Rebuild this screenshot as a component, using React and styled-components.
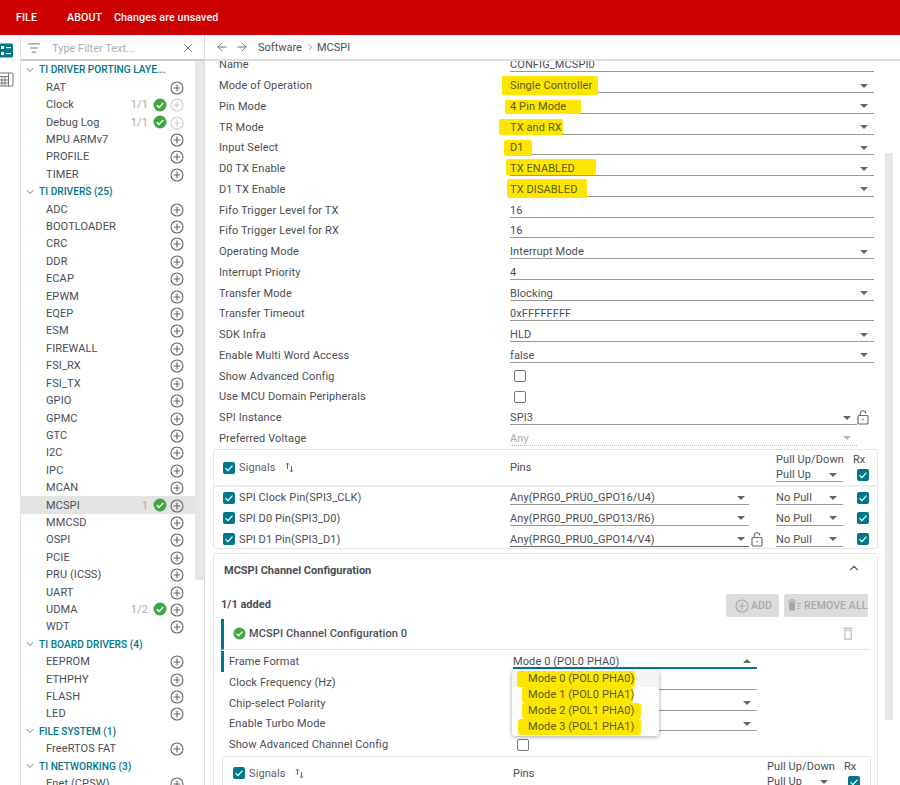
import React from 'react';
import styled, { createGlobalStyle } from 'styled-components';
import { ArrowLeft, ArrowRight, X, ListFilter, ChevronDown, ChevronUp, ChevronRight } from 'lucide-react';

const TEAL = '#00788a';
const YELLOW = '#ffe600';

const Global = createGlobalStyle`
  html, body { margin: 0; padding: 0; background: #fff; }
  body { font-family: Roboto, "Liberation Sans", sans-serif; font-size: 11px; color: #4a4d55; }
  * { box-sizing: border-box; }
`;

const Page = styled.div`
  width: 900px; height: 785px; overflow: hidden; display: flex; flex-direction: column;
`;
const TopBar = styled.header`
  height: 35px; flex: none; background: #cc0000; color: #fff; display: flex; align-items: center;
  padding-left: 16px; font-weight: 500; font-size: 10.7px; letter-spacing: .1px;
`;
const MenuItem = styled.span`
  width: ${p => p.$w}px; flex: none;
`;
const Body = styled.div`
  flex: 1; min-height: 0; display: flex;
`;
const Rail = styled.nav`
  width: 21px; flex: none; border-right: 1px solid #e4e4e4; display: flex; flex-direction: column; gap: 14px; padding-top: 8px;
`;
const Sidebar = styled.aside`
  width: 184px; flex: none; display: flex; flex-direction: column; border-right: 1px solid #ddd;
`;
const FilterBar = styled.div`
  height: 26px; flex: none; display: flex; align-items: center; padding: 2px 9px 0 6px; border-bottom: 2px solid #ccc; color: #666;
`;
const FilterText = styled.span`
  flex: 1; color: #aab0b5; margin-left: 11px; font-size: 11px;
`;
const SideScroll = styled.div`
  flex: 1; min-height: 0; display: flex; overflow: hidden;
`;
const TreeList = styled.div`
  width: 174px; flex: none; padding-top: .2px;
`;
const SideTrack = styled.div`
  width: 9px; height: 519px; flex: none; background: #e6e6e6;
`;
const SectionRow = styled.div`
  height: 17.42px; display: flex; align-items: center; padding-left: 3px; color: ${TEAL}; font-weight: 500; font-size: 10.2px; white-space: nowrap;
  svg { color: #777; margin-right: 3px; flex: none; }
`;
const ItemRow = styled.div`
  height: 17.42px; display: flex; align-items: center; padding-left: 25px; padding-right: 11px; white-space: nowrap;
  background: ${p => (p.$active ? '#e4e4e4' : 'transparent')}; font-size: 11px; letter-spacing: .1px;
`;
const ItemName = styled.span`
  flex: 1;
`;
const ItemCount = styled.span`
  color: #a9a9a9; margin-right: 5px;
`;
const Main = styled.main`
  flex: 1; min-width: 0; display: flex; flex-direction: column;
`;
const Crumbs = styled.div`
  height: 26px; flex: none; display: flex; align-items: center; padding-left: 10px; border-bottom: 2px solid #ddd;
  color: #666; svg { flex: none; }
`;
const CrumbText = styled.span`
  color: #4a4d55; font-size: 11px; margin-left: ${p => p.$gap || 0}px;
`;
const MainScroll = styled.div`
  flex: 1; min-height: 0; overflow: hidden; display: flex;
`;
const Content = styled.div`
  width: 680px; flex: none; padding: 0 7px 0 8px; margin-top: -6.4px;
`;
const MainTrack = styled.div`
  width: 8px; height: 567px; margin-top: 92px; background: #e6e6e6; flex: none;
`;
const FormRow = styled.div`
  height: 20.75px; display: grid; grid-template-columns: ${p => p.$label || 291}px 1fr ${p => p.$tail || 0}px;
  align-items: center; padding-left: 6px; padding-right: ${p => p.$right ?? 4}px; position: relative;
  white-space: nowrap;
`;
const Label = styled.span`
  font-size: 11px; letter-spacing: .12px;
`;
const Value = styled.div`
  height: 15px; line-height: 13px; padding-top: 1px; border-bottom: ${p => (p.$thick ? 2 : 1)}px ${p => (p.$dotted ? 'dotted' : 'solid')} ${p => p.$line || '#999'};
  display: flex; justify-content: space-between; align-items: center; padding-right: 6px; letter-spacing: .1px;
  color: ${p => (p.$muted ? '#aaa' : 'inherit')};
`;
const Caret = styled.i`
  width: 0; height: 0; flex: none; border-left: 4px solid transparent; border-right: 4px solid transparent;
  border-${p => (p.$up ? 'bottom' : 'top')}: 4px solid ${p => (p.$muted ? '#bbb' : '#666')};
`;
const Highlight = styled.span`
  background: ${YELLOW};
  padding: ${p => p.$t}px ${p => p.$r}px ${p => p.$b}px ${p => p.$l}px;
  margin: -${p => p.$t}px -${p => p.$r}px -${p => p.$b}px -${p => p.$l}px;
  border-radius: 2px; color: #5a5a10;
`;
const Box = styled.span`
  width: 12px; height: 12px; flex: none; display: inline-flex; align-items: center; justify-content: center; border-radius: 2px;
  background: ${p => (p.$on ? TEAL : '#fff')}; border: ${p => (p.$on ? 'none' : '1.5px solid #777')};
`;
const FormBox = styled(Box)`
  margin-left: 4px;
`;
const Card = styled.section`
  border: 1px solid #e6e6e6; border-radius: 3px; background: #fff;
`;
const SignalsCard = styled(Card)`
  height: 100px; margin-top: 0.5px; padding-left: 9px;
`;
const InnerCard = styled(Card)`
  margin: 1px 6px 0 8px; padding-left: 10px; height: 60px;
`;
const SignalsGrid = styled.div`
  display: grid; align-items: center; height: ${p => p.$h}px; white-space: nowrap;
  grid-template-columns: ${p => p.$cols};
  ${p => p.$head && 'border-bottom: 2px solid #eee; margin-left: -9px; padding-left: 9px;'}
`;
const SignalName = styled.span`
  display: flex; align-items: center; gap: 4px; letter-spacing: .1px;
  svg { flex: none; }
`;
const HeadName = styled(SignalName)`
  color: #5b6068;
`;
const SortMark = styled.span`
  margin-left: 5px; display: inline-flex;
`;
const PinCell = styled.div`
  display: flex; align-items: center; gap: 2px;
`;
const PinValue = styled(Value)`
  width: 239px; flex: none; padding-right: 4px;
`;
const PullStack = styled.div`
  display: flex; flex-direction: column; align-self: start; padding-top: 2px;
`;
const PullTitle = styled.span`
  line-height: 15px; letter-spacing: .1px;
`;
const RxCell = styled.div`
  grid-column: 5; display: flex; flex-direction: column; align-items: flex-start; align-self: start; padding-top: 2px; gap: 2px;
`;
const RxTitle = styled.span`
  margin-left: -4px; line-height: 15px;
`;
const ChannelCard = styled(Card)`
  margin-top: 3.5px; height: 260px;
`;
const ChannelHead = styled.div`
  height: 33px; display: flex; align-items: center; justify-content: space-between; padding: 0 16px 0 10px; font-weight: 700; color: #4a4d55;
  svg { color: #666; margin-top: -4px; }
`;
const AddedRow = styled.div`
  height: 32px; display: flex; align-items: flex-start; justify-content: space-between; padding: 7px 9px 0 7px;
`;
const AddedText = styled.b`
  font-weight: 700; margin-top: 4px;
`;
const BtnGroup = styled.div`
  display: flex; gap: 5px;
`;
const GreyBtn = styled.span`
  height: 23px; display: inline-flex; align-items: center; gap: 2px; padding: 0 0 0 ${p => p.$pad}px; background: #dcdcdc; color: #a8a8a8;
  font-weight: 500; font-size: 10.5px; border-radius: 2px; letter-spacing: .1px; width: ${p => p.$w}px; white-space: nowrap; overflow: hidden;
`;
const InstanceRow = styled.div`
  height: 31px; margin: 0 7px; border-left: 3px solid ${TEAL}; border-bottom: 1px solid #e4e4e4; display: flex; align-items: center;
  justify-content: space-between; padding: 0 17px 0 9px; font-weight: 500; letter-spacing: .1px; color: #4a4d55;
`;
const InstanceTitle = styled.span`
  display: flex; align-items: center;
`;
const ChanRows = styled.div`
  margin-top: 1.5px;
`;
const ChanRow = styled(FormRow)`
  margin-left: 7px; padding-left: 5px; padding-right: 0; width: 536px;
  grid-template-columns: 284px 1fr;
  border-left: 3px solid ${p => (p.$bar ? TEAL : 'transparent')};
`;
const Menu = styled.div`
  position: absolute; left: 288px; top: 18.5px; width: 147px; height: 66px; background: #fff; border-radius: 3px; z-index: 5;
  box-shadow: 0 1px 4px rgba(0,0,0,.35); padding-top: 1px;
`;
const MenuOption = styled.div`
  height: 16px; line-height: 16px; padding-left: 16px; background: ${p => (p.$hover ? '#f4f4f4' : 'transparent')}; letter-spacing: .1px;
`;
const MenuMark = styled.span`
  display: inline-block; background: ${YELLOW}; color: #5a5a10; height: 16px; margin-left: -${p => p.$l}px; padding-left: ${p => p.$l}px; width: ${p => p.$w}px; border-radius: 3px;
`;

const PlusIcon = ({ off, tone }) => (
  <svg width="14" height="14" viewBox="0 0 14 14" fill="none" stroke={tone || (off ? '#cfcfcf' : '#666')} strokeWidth="1.1" style={{ flex: 'none', marginTop: 1 }}>
    <circle cx="7" cy="7" r="6" /><path d="M7 3.6v6.8M3.6 7h6.8" />
  </svg>
);
const CheckDot = ({ size = 14 }) => (
  <svg width={size} height={size} viewBox="0 0 14 14" style={{ flex: 'none', marginRight: 3 }}>
    <circle cx="7" cy="7" r="6.5" fill="#3fa648" />
    <path d="M3.8 7.2l2.2 2.2 4.2-4.4" fill="none" stroke="#fff" strokeWidth="1.5" />
  </svg>
);
const Tick = () => (
  <svg width="10" height="10" viewBox="0 0 10 10"><path d="M1.5 5.2l2.4 2.4 4.6-5" fill="none" stroke="#fff" strokeWidth="1.2" /></svg>
);
const LockIcon = () => (
  <svg width="12" height="15" viewBox="0 0 12 15" fill="none" stroke="#666" strokeWidth="1.1" style={{ flex: 'none' }}>
    <rect x="1" y="5.5" width="10" height="8.5" rx="1" /><path d="M3.2 5.5V3.6a2.8 2.8 0 0 1 5.6 0" /><circle cx="6" cy="9.6" r=".8" fill="#666" stroke="none" />
  </svg>
);
const TrashIcon = () => (
  <svg width="10" height="13" viewBox="0 0 10 13" fill="none" stroke="#bdbdbd" strokeWidth="1.2"><path d="M.5 1.2h9M2 3.2h6.2v9H1.8z" /></svg>
);
const RemoveIcon = () => (
  <svg width="14" height="12" viewBox="0 0 14 12" fill="#a8a8a8" style={{ flex: 'none' }}><path d="M0 1.5h8v1H0zM1 3h6v8.5H1zM2.5 0h3v1h-3zM9 4h4v1H9zM9 6.5h3.4v1H9zM9 9h2.4v1H9z" /></svg>
);
const SortIcon = () => (
  <svg width="9" height="11" viewBox="0 0 9 11" fill="none" stroke="#666" strokeWidth="1"><path d="M2.5 7V1M1 2.5L2.5 1 4 2.5M6.5 4v6M5 8.5L6.5 10 8 8.5" /></svg>
);
const ListRailIcon = () => (
  <svg width="14" height="15" viewBox="0 0 14 15" style={{ display: 'block' }}>
    <rect x="-1" y="0.5" width="14" height="14" rx="1.5" fill={TEAL} />
    <g fill="#fff"><rect x="1" y="3" width="3" height="3" /><rect x="1" y="9" width="3" height="3" /><rect x="6" y="4" width="5" height="1.2" /><rect x="6" y="10" width="5" height="1.2" /></g>
  </svg>
);
const GridRailIcon = () => (
  <svg width="14" height="15" viewBox="0 0 14 15" fill="none" stroke="#777" style={{ display: 'block' }}>
    <rect x="-1" y="1" width="14" height="13" rx="1" />
    <path d="M-1 4.5h10M8.5 1v13M-1 8h9.5M-1 11h9.5M2 4.5V14M5 4.5V14" />
  </svg>
);

const groups = [
  ['TI DRIVER PORTING LAYE...', [['RAT'], ['Clock', '1/1', 1], ['Debug Log', '1/1', 1], ['MPU ARMv7'], ['PROFILE'], ['TIMER']]],
  ['TI DRIVERS (25)', [['ADC'], ['BOOTLOADER'], ['CRC'], ['DDR'], ['ECAP'], ['EPWM'], ['EQEP'], ['ESM'], ['FIREWALL'], ['FSI_RX'], ['FSI_TX'], ['GPIO'], ['GPMC'], ['GTC'], ['I2C'], ['IPC'], ['MCAN'], ['MCSPI', '1', 0, true], ['MMCSD'], ['OSPI'], ['PCIE'], ['PRU (ICSS)'], ['UART'], ['UDMA', '1/2', 0], ['WDT']]],
  ['TI BOARD DRIVERS (4)', [['EEPROM'], ['ETHPHY'], ['FLASH'], ['LED']]],
  ['FILE SYSTEM (1)', [['FreeRTOS FAT']]],
  ['TI NETWORKING (3)', [['Enet (CPSW)']]],
];

const forms = [
  ['Name', 'CONFIG_MCSPI0'],
  ['Mode of Operation', 'Single Controller', 's', [3, 6, 3, 8]],
  ['Pin Mode', '4 Pin Mode', 's', [0, 15, 1, 5]],
  ['TR Mode', 'TX and RX', 's', [2, 1, 1, 11]],
  ['Input Select', 'D1', 's', [1, 8, 2, 6]],
  ['D0 TX Enable', 'TX ENABLED', 's', [3, 21, 0, 4]],
  ['D1 TX Enable', 'TX DISABLED', 's', [3.5, 10, 2.5, 3]],
  ['Fifo Trigger Level for TX', '16'],
  ['Fifo Trigger Level for RX', '16'],
  ['Operating Mode', 'Interrupt Mode', 's'],
  ['Interrupt Priority', '4'],
  ['Transfer Mode', 'Blocking', 's'],
  ['Transfer Timeout', '0xFFFFFFFF'],
  ['SDK Infra', 'HLD', 's'],
  ['Enable Multi Word Access', 'false', 's'],
  ['Show Advanced Config', null, 'c'],
  ['Use MCU Domain Peripherals', null, 'c'],
];

const options = [
  ['Mode 0 (POL0 PHA0)', 11, 118, true],
  ['Mode 1 (POL0 PHA1)', 6, 111],
  ['Mode 2 (POL1 PHA0)', 6, 119],
  ['Mode 3 (POL1 PHA1)', 10, 123],
];

const Signal = ({ name, lock, cols }) => (
  <SignalsGrid $h={20.75} $cols={cols}>
    <SignalName><Box $on><Tick /></Box>{name[0]}</SignalName>
    <PinCell>
      <PinValue $line={lock ? '#666' : '#999'}>{name[1]}<Caret /></PinValue>
      {lock && <LockIcon />}
    </PinCell>
    <Value>No Pull<Caret /></Value>
    <span />
    <Box $on><Tick /></Box>
  </SignalsGrid>
);

const outerCols = '287px 266px 67px 14px 12px';
const innerCols = '280px 254px 67px 14px 12px';

const HeadRow = ({ cols, h }) => (
  <SignalsGrid $h={h} $cols={cols} $head>
    <HeadName><Box $on><Tick /></Box>Signals<SortMark><SortIcon /></SortMark></HeadName>
    <span>Pins</span>
    <PullStack><PullTitle>Pull Up/Down</PullTitle><Value>Pull Up<Caret /></Value></PullStack>
    <RxCell><RxTitle>Rx</RxTitle><Box $on><Tick /></Box></RxCell>
  </SignalsGrid>
);

export default function App() {
  return (
    <Page>
      <Global />
      <TopBar>
        <MenuItem $w={51}>FILE</MenuItem>
        <MenuItem $w={47}>ABOUT</MenuItem>
        <span>Changes are unsaved</span>
      </TopBar>
      <Body>
        <Rail><ListRailIcon /><GridRailIcon /></Rail>
        <Sidebar>
          <FilterBar>
            <ListFilter size={14} strokeWidth={1.5} />
            <FilterText>Type Filter Text...</FilterText>
            <X size={14} strokeWidth={1.5} />
          </FilterBar>
          <SideScroll>
            <TreeList>
              {groups.map(([title, items]) => (
                <React.Fragment key={title}>
                  <SectionRow><ChevronDown size={12} />{title}</SectionRow>
                  {items.map(([n, count, off, active]) => (
                    <ItemRow key={n} $active={active}>
                      <ItemName>{n}</ItemName>
                      {count && <ItemCount>{count}</ItemCount>}
                      {count && <CheckDot />}
                      <PlusIcon off={off} />
                    </ItemRow>
                  ))}
                </React.Fragment>
              ))}
            </TreeList>
            <SideTrack />
          </SideScroll>
        </Sidebar>
        <Main>
          <Crumbs>
            <ArrowLeft size={14} strokeWidth={1.5} />
            <ArrowRight size={14} strokeWidth={1.5} style={{ marginLeft: 6 }} />
            <CrumbText $gap={9}>Software</CrumbText>
            <ChevronRight size={9} style={{ margin: '0 2px 0 4px' }} />
            <CrumbText>MCSPI</CrumbText>
          </Crumbs>
          <MainScroll>
            <Content>
              {forms.map(([label, val, kind, hl]) => (
                <FormRow key={label}>
                  <Label>{label}</Label>
                  {kind === 'c' ? <FormBox /> : (
                    <Value>
                      {hl ? <Highlight $t={hl[0]} $r={hl[1]} $b={hl[2]} $l={hl[3]}>{val}</Highlight> : <span>{val}</span>}
                      {kind === 's' && <Caret />}
                    </Value>
                  )}
                </FormRow>
              ))}
              <FormRow $tail={21} $right={0}>
                <Label>SPI Instance</Label>
                <Value>SPI3<Caret /></Value>
                <LockIcon />
              </FormRow>
              <FormRow $tail={21} $right={0}>
                <Label>Preferred Voltage</Label>
                <Value $dotted $muted $line="#bbb">Any<Caret $muted /></Value>
                <span />
              </FormRow>
              <SignalsCard>
                <HeadRow cols={outerCols} h={37} />
                <Signal cols={outerCols} name={['SPI Clock Pin(SPI3_CLK)', 'Any(PRG0_PRU0_GPO16/U4)']} />
                <Signal cols={outerCols} name={['SPI D0 Pin(SPI3_D0)', 'Any(PRG0_PRU0_GPO13/R6)']} />
                <Signal cols={outerCols} name={['SPI D1 Pin(SPI3_D1)', 'Any(PRG0_PRU0_GPO14/V4)']} lock />
              </SignalsCard>
              <ChannelCard>
                <ChannelHead>MCSPI Channel Configuration<ChevronUp size={14} /></ChannelHead>
                <AddedRow>
                  <AddedText>1/1 added</AddedText>
                  <BtnGroup>
                    <GreyBtn $w={53} $pad={9}><PlusIcon tone="#a8a8a8" />ADD</GreyBtn>
                    <GreyBtn $w={84} $pad={4}><RemoveIcon />REMOVE ALL</GreyBtn>
                  </BtnGroup>
                </AddedRow>
                <InstanceRow>
                  <InstanceTitle><CheckDot size={13} />MCSPI Channel Configuration 0</InstanceTitle>
                  <TrashIcon />
                </InstanceRow>
                <ChanRows>
                  <ChanRow $bar>
                    <Label>Frame Format</Label>
                    <Value $line={TEAL} $thick>Mode 0 (POL0 PHA0)<Caret $up /></Value>
                    <Menu>
                      {options.map(([t, l, w, hover]) => (
                        <MenuOption key={t} $hover={hover}><MenuMark $l={l} $w={w}>{t}</MenuMark></MenuOption>
                      ))}
                    </Menu>
                  </ChanRow>
                  <ChanRow><Label>Clock Frequency (Hz)</Label><Value /></ChanRow>
                  <ChanRow><Label>Chip-select Polarity</Label><Value><span /><Caret /></Value></ChanRow>
                  <ChanRow><Label>Enable Turbo Mode</Label><Value><span /><Caret /></Value></ChanRow>
                  <ChanRow><Label>Show Advanced Channel Config</Label><FormBox /></ChanRow>
                </ChanRows>
                <InnerCard>
                  <HeadRow cols={innerCols} h={34} />
                </InnerCard>
              </ChannelCard>
            </Content>
            <MainTrack />
          </MainScroll>
        </Main>
      </Body>
    </Page>
  );
}
